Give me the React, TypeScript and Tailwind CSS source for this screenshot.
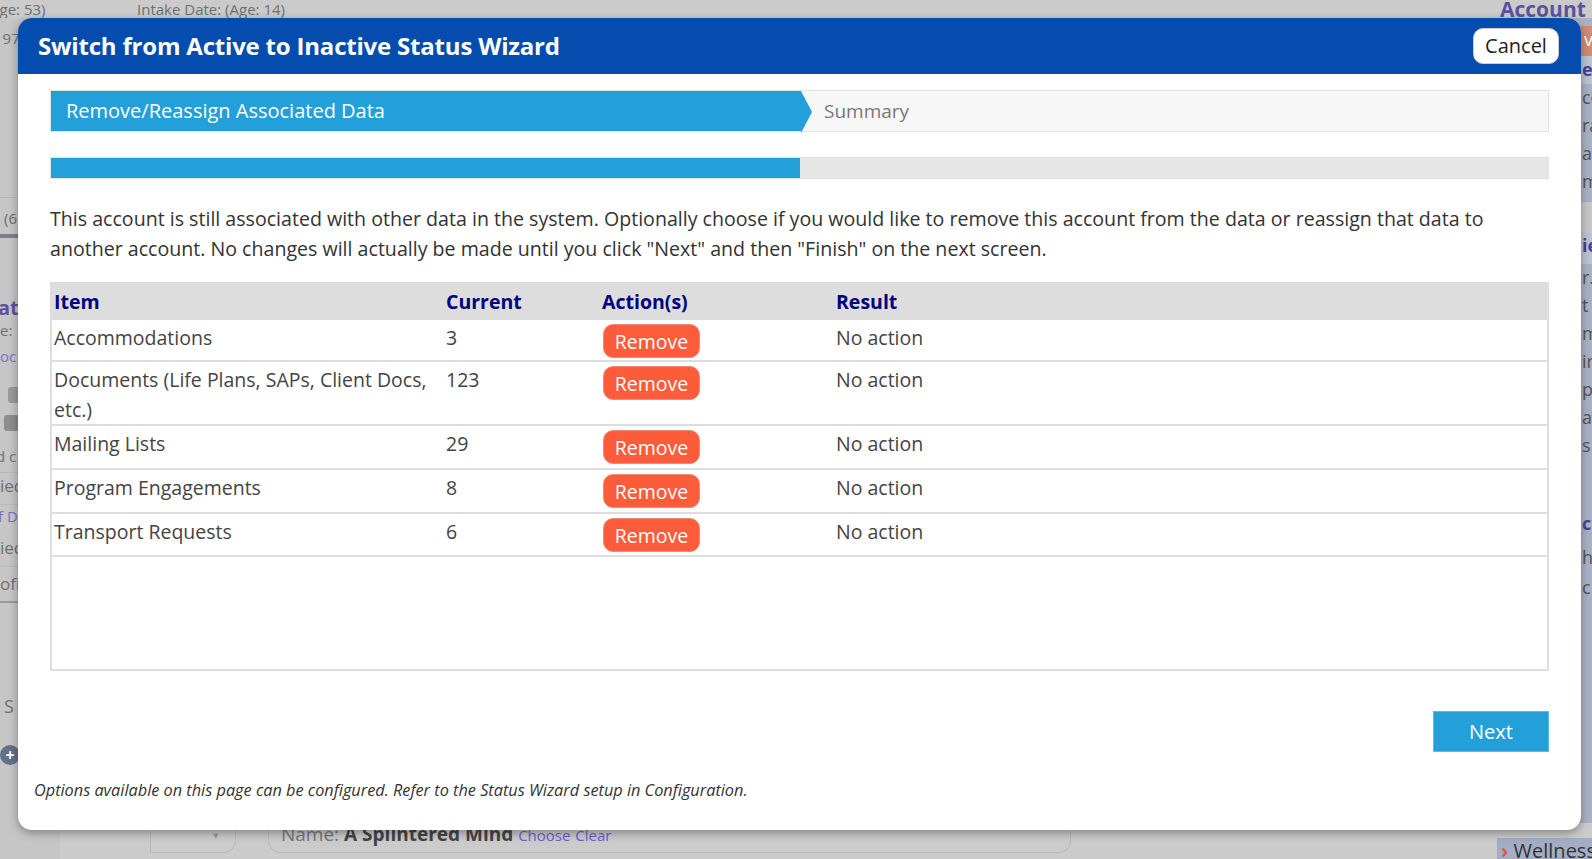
import React from 'react';

const rows = [
  { item: 'Accommodations', current: '3', h: 'h-[42px]' },
  { item: 'Documents (Life Plans, SAPs, Client Docs, etc.)', current: '123', h: 'h-[64px]' },
  { item: 'Mailing Lists', current: '29', h: 'h-[44px]' },
  { item: 'Program Engagements', current: '8', h: 'h-[44px]' },
  { item: 'Transport Requests', current: '6', h: 'h-[43px]' },
];

function BackgroundPage() {
  return (
    <div className="flex flex-col h-full text-[15px] text-[#6f6f6f]">
      {/* top info line */}
      <div className="flex items-start h-[18px] leading-[18px]">
        <span className="-ml-[10px] w-[147px] whitespace-nowrap">Age: 53)</span>
        <span>Intake Date: (Age: 14)</span>
        <span className="ml-auto mr-[-24px] w-[116px] text-[21px] font-bold text-[#5b51a0] leading-[18px] overflow-hidden whitespace-nowrap">Account</span>
      </div>
      <div className="flex flex-1">
        {/* left column */}
        <div className="w-[60px] flex flex-col bg-[#c6c6c6]">
          <div className="h-[30px] leading-[40px] -ml-[6px]">197</div>
          <div className="h-[150px] border-b border-[#b9b9b9]" />
          <div className="h-[40px] leading-[40px] pl-[4px] border-b-4 border-[#7a7f8c]">(6</div>
          <div className="h-[55px]" />
          <div className="h-[26px] font-bold text-[#5b51a0] text-[20px] -ml-[2px]">ati</div>
          <div className="h-[26px]">e:</div>
          <div className="h-[40px] text-[#7b6fd0]">oc</div>
          <div className="h-[28px] pl-[8px] pt-[2px]">
            <div className="w-[16px] h-[16px] rounded-[3px] bg-[#9a9a9a]" />
          </div>
          <div className="h-[32px] pl-[4px] pt-[2px]">
            <div className="w-[16px] h-[16px] rounded-[3px] bg-[#8d8d8d]" />
          </div>
          <div className="h-[28px] -ml-[4px] border-b border-[#b9b9b9]">d c</div>
          <div className="h-[32px] text-[17px] border-b border-[#b9b9b9]">ied</div>
          <div className="h-[30px] text-[#7b6fd0] -ml-[2px]">f D</div>
          <div className="h-[32px] text-[17px] border-b border-[#b9b9b9]">ied</div>
          <div className="h-[36px] text-[17px] leading-[34px] border-b-2 border-[#9a9a9a]">ofi</div>
          <div className="h-[90px]" />
          <div className="h-[52px] text-[18px] pl-[4px]">S</div>
          <div>
            <div className="w-[20px] h-[20px] rounded-full bg-[#63708a] text-white text-[16px] leading-[20px] text-center font-bold">+</div>
          </div>
        </div>

        <div className="flex-1 flex flex-col">
          <div className="flex-1 flex">
            <div className="flex-1" />
            {/* right column */}
            <div className="w-[40px] flex flex-col bg-[#a9b2c4] text-[18px] text-[#555] overflow-hidden whitespace-nowrap">
              <div className="h-[30px] mt-[8px] bg-[#d08c74] text-white pl-[32px]">v</div>
              <div className="h-[28px] font-bold text-[#4a4390] pl-[30px] bg-[#bcc3d2]">er</div>
              <div className="h-[28px] pl-[30px]">co</div>
              <div className="h-[28px] pl-[30px]">ra</div>
              <div className="h-[28px] pl-[30px]">at</div>
              <div className="h-[34px] pl-[30px]">m</div>
              <div className="h-[30px] bg-[#c7c7c7]" />
              <div className="h-[32px] font-bold text-[#4a4390] pl-[30px] bg-[#bcc3d2]">ie</div>
              <div className="h-[28px] pl-[30px]">r.</div>
              <div className="h-[28px] pl-[30px]">t</div>
              <div className="h-[28px] pl-[30px]">m</div>
              <div className="h-[28px] pl-[30px]">ir</div>
              <div className="h-[28px] pl-[30px]">p</div>
              <div className="h-[28px] pl-[30px]">a</div>
              <div className="h-[28px] pl-[30px]">s</div>
              <div className="h-[50px]" />
              <div className="h-[34px] font-bold text-[#4a4390] pl-[30px]">c</div>
              <div className="h-[30px] pl-[30px]">h</div>
              <div className="h-[30px] pl-[30px]">c</div>
            </div>
          </div>
          {/* bottom record bar */}
          <div className="flex h-[36px] items-start">
            <div className="ml-[90px] w-[86px] h-[30px] border border-[#b9b9b9] rounded-br-[12px] text-right pr-[16px] text-[#9a9a9a] text-[11px] leading-[22px]">▾</div>
            <div className="ml-[32px] w-[803px] h-[30px] border border-[#b9b9b9] rounded-b-[12px] pl-[12px] leading-[20px] text-[19px] text-[#777] whitespace-nowrap">
              Name: <span className="font-bold text-[#444]">A Splintered Mind</span>{' '}
              <span className="text-[15px] text-[#6b5fd0]">Choose</span>{' '}
              <span className="text-[15px] text-[#6b5fd0]">Clear</span>
            </div>
            <div className="ml-auto mt-[15px] w-[95px] h-[21px] bg-[#a3aec6] pl-[4px] text-[20px] leading-[26px] text-[#333] whitespace-nowrap overflow-hidden">
              <span className="text-[#d0603e] font-bold">›</span> Wellness
            </div>
          </div>
        </div>
      </div>
    </div>
  );
}

export default function App() {
  return (
    <div
      className="relative w-[1592px] h-[859px] overflow-hidden bg-[#cbcbcb]"
      style={{ fontFamily: '"Open Sans", "Noto Sans", sans-serif' }}
    >
      <BackgroundPage />

      {/* wizard dialog */}
      <div className="absolute left-[18px] top-[18px] w-[1563px] h-[812px] bg-white rounded-[14px] shadow-[0_3px_10px_rgba(0,0,0,0.35)] flex flex-col overflow-hidden">
        <div className="h-[56px] bg-[#044cae] flex items-center justify-between pl-[20px] pr-[22px] shrink-0">
          <h1 className="text-white text-[24px] font-bold tracking-[-0.2px]">
            Switch from Active to Inactive Status Wizard
          </h1>
          <button className="h-[36px] w-[86px] bg-white rounded-[10px] text-[#222] text-[20px] border border-[#ccc]">
            Cancel
          </button>
        </div>

        <div className="flex-1 flex flex-col px-[32px]">
          {/* steps */}
          <div className="mt-[16px] h-[42px] flex bg-[#f7f7f7] border border-[#e2e2e2]">
            <div className="relative w-[750px] bg-[#23a0da] flex items-center pl-[15px] text-white text-[20px]">
              Remove/Reassign Associated Data
              <svg className="absolute right-[-11px] top-0" width="11" height="42" viewBox="0 0 11 42">
                <polygon points="0,0 11,21 0,42" fill="#23a0da" />
              </svg>
            </div>
            <div className="flex items-center pl-[23px] text-[#777] text-[19px]">Summary</div>
          </div>

          {/* progress */}
          <div className="mt-[25px] h-[22px] bg-[#e6e6e6] border border-[#e2e2e2]">
            <div className="h-full w-[749px] bg-[#23a0da]" />
          </div>

          <p className="mt-[25px] text-[19.6px] leading-[30px] text-[#333]">
            This account is still associated with other data in the system. Optionally choose if you would like to remove this account from the data or reassign that data to another account. No changes will actually be made until you click "Next" and then "Finish" on the next screen.
          </p>

          {/* associated data */}
          <div className="mt-[18px] h-[389px] border-2 border-[#dedede]">
            <div className="h-[36px] bg-[#dddddd] grid grid-cols-[392px_156px_234px_1fr] items-center text-[19.5px] font-bold text-[#000080]">
              <div className="pl-[2px]">Item</div>
              <div className="pl-[2px]">Current</div>
              <div className="pl-[2px]">Action(s)</div>
              <div className="pl-[2px]">Result</div>
            </div>
            {rows.map((r) => (
              <div
                key={r.item}
                className={`${r.h} grid grid-cols-[392px_156px_234px_1fr] border-b-2 border-[#dedede] text-[19.5px] leading-[30px] text-[#444]`}
              >
                <div className="pl-[2px] pt-[3px] pr-[8px]">{r.item}</div>
                <div className="pl-[2px] pt-[3px]">{r.current}</div>
                <div className="pl-[3px] pt-[4px]">
                  <button className="w-[97px] h-[34px] rounded-[10px] bg-[#fd5c3a] border border-[#f08a74] text-white text-[19.5px] leading-[34px]">
                    Remove
                  </button>
                </div>
                <div className="pl-[2px] pt-[3px]">No action</div>
              </div>
            ))}
          </div>

          <div className="mt-[40px] flex justify-end">
            <button className="w-[116px] h-[41px] bg-[#23a0da] text-white text-[20px] border border-[#5bbbe6]">
              Next
            </button>
          </div>
        </div>

        <p className="pl-[16px] pb-[28px] text-[16.3px] italic text-[#333]">
          Options available on this page can be configured. Refer to the Status Wizard setup in Configuration.
        </p>
      </div>
    </div>
  );
}
